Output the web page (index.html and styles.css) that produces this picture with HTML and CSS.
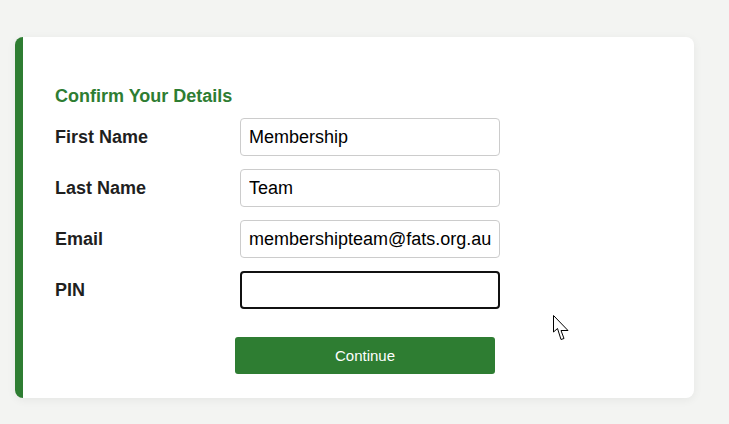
FILE: index.html
```html
<!DOCTYPE html>
<html>
<head>
<meta charset="utf-8">
<link rel="stylesheet" href="styles.css">
</head>
<body>
<div class="card">
  <h2 class="title">Confirm Your Details</h2>
  <form class="form">
    <div class="row"><label class="label">First Name</label><input class="field" type="text" value="Membership"></div>
    <div class="row"><label class="label">Last Name</label><input class="field" type="text" value="Team"></div>
    <div class="row"><label class="label">Email</label><input class="field" type="text" value="membershipteam@fats.org.au"></div>
    <div class="row"><label class="label">PIN</label><input class="field focused" type="text" value=""></div>
    <button class="btn" type="button">Continue</button>
  </form>
  <svg class="cursor" width="17" height="27" viewBox="0 0 17 27">
    <path d="M0.5 0.5 L0.5 17 L4.5 13.5 L8 24.5 L11 23.5 L8 15.5 L15 15.5 Z" fill="#fff" stroke="#000" stroke-width="1" stroke-linejoin="miter"/>
  </svg>
</div>
</body>
</html>
```
FILE: styles.css
```css
html, body { margin: 0; padding: 0; }
body {
  background: #f3f4f2;
  font-family: "Liberation Sans", Arial, sans-serif;
  padding: 37px 35px 0 15px;
  height: 424px;
  box-sizing: border-box;
  overflow: hidden;
}
.card {
  position: relative;
  width: 679px;
  height: 361px;
  box-sizing: border-box;
  background: #fff;
  border-left: 8px solid #2e7d32;
  border-radius: 8px;
  box-shadow: 0 2px 10px rgba(0,0,0,0.06);
  padding: 49px 32px 0 32px;
}
.title {
  margin: 0 0 12px 0;
  font-size: 18px;
  line-height: 20px;
  font-weight: bold;
  color: #2e7d32;
}
.form {
  display: flex;
  flex-direction: column;
  gap: 13px;
}
.row {
  display: grid;
  grid-template-columns: 185px 260px;
  align-items: center;
}
.label {
  font-size: 18px;
  font-weight: bold;
  color: #1f1f1f;
}
.field {
  width: 260px;
  height: 38px;
  box-sizing: border-box;
  border: 1px solid #cccccc;
  border-radius: 4px;
  padding: 0 8px;
  font-family: "Liberation Sans", Arial, sans-serif;
  font-size: 18px;
  color: #000;
  outline: none;
}
.field.focused {
  border: 2px solid #111;
  padding: 0 7px;
}
.btn {
  margin: 15px 0 0 180px;
  width: 260px;
  height: 37px;
  background: #2e7d32;
  color: #fff;
  border: none;
  border-radius: 3px;
  font-family: "Liberation Sans", Arial, sans-serif;
  font-size: 15px;
}
.cursor {
  position: absolute;
  left: 530px;
  top: 278px;
}
```
